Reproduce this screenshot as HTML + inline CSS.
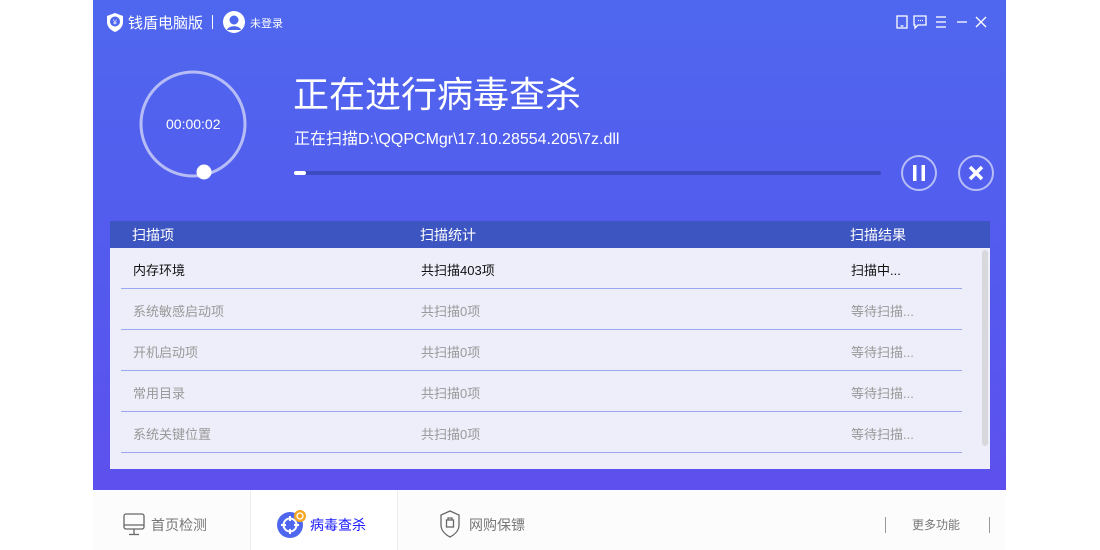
<!DOCTYPE html>
<html><head><meta charset="utf-8"><style>
*{margin:0;padding:0;box-sizing:border-box}
body{width:1100px;height:550px;background:#fff;position:relative;overflow:hidden;font-family:"Liberation Sans","Noto Sans CJK SC",sans-serif}
.win{position:absolute;left:93px;top:0;width:913px;height:490px;background:linear-gradient(180deg,#4f67ee 0%,#5459ee 60%,#5e50ee 100%)}
.a{position:absolute;white-space:nowrap}
.w{color:#fff}
.tbl{position:absolute;left:110px;top:221px;width:880px;height:248px;background:#eeeefa}
.hd{position:absolute;left:0;top:0;width:880px;height:27px;background:#3d55c0;color:#fff;font-size:14px}
.row{position:absolute;left:11px;width:841px;height:41px;border-bottom:1px solid #9aa8f0;font-size:13px;color:#999}
.row span{position:absolute;top:12px}
.bot{position:absolute;left:93px;top:490px;width:913px;height:60px;background:#fcfcfc}
</style></head><body>
<div class="win">
  <svg class="a" style="left:12px;top:12px" width="20" height="21" viewBox="0 0 20 21"><path d="M10 1 L18 4 V10 C18 15 14 18.5 10 20 C6 18.5 2 15 2 10 V4 Z" fill="#fff"/><circle cx="10" cy="9.5" r="5" fill="#4f67ee"/><text x="10" y="12.5" font-size="7" fill="#fff" text-anchor="middle" font-family="Liberation Sans">¥</text></svg>
  <div class="a w" style="left:35px;top:12px;font-size:15px">钱盾电脑版</div>
  <div class="a" style="left:119px;top:15px;width:1px;height:14px;background:#fff"></div>
  <svg class="a" style="left:130px;top:11px" width="22" height="22" viewBox="0 0 22 22"><circle cx="11" cy="11" r="11" fill="#fff"/><circle cx="11" cy="9" r="4.5" fill="#4f67ee"/><path d="M4 19 C5 14 17 14 18 19 Z" fill="#4f67ee"/></svg>
  <div class="a w" style="left:157px;top:15px;font-size:11px">未登录</div>
  <svg class="a" style="left:803px;top:14px" width="100" height="16" viewBox="0 0 100 16" stroke="#fff" fill="none" stroke-width="1.3"><rect x="1" y="2" width="10" height="12"/><line x1="4.5" y1="12" x2="7.5" y2="12"/><path d="M18 2 H30 V11 H22 L19 14 V11 H18 Z"/><line x1="22" y1="6.5" x2="23" y2="6.5"/><line x1="24" y1="6.5" x2="25" y2="6.5"/><line x1="26" y1="6.5" x2="27" y2="6.5"/><line x1="40" y1="3" x2="50" y2="3"/><line x1="40" y1="8" x2="50" y2="8"/><line x1="40" y1="13" x2="50" y2="13"/><line x1="61" y1="8" x2="71" y2="8"/><line x1="80" y1="3" x2="90" y2="13"/><line x1="90" y1="3" x2="80" y2="13"/></svg>
</div>
<svg class="a" style="left:138px;top:69px" width="112" height="112" viewBox="0 0 112 112"><circle cx="55" cy="55" r="52" stroke="#b6bdf6" stroke-width="3" fill="none"/><circle cx="66" cy="103" r="7.5" fill="#fff"/></svg>
<div class="a w" style="left:166px;top:116px;font-size:14px">00:00:02</div>
<div class="a w" style="left:293px;top:72px;font-size:36px;line-height:46px">正在进行病毒查杀</div>
<div class="a w" style="left:294px;top:125px;font-size:16px">正在扫描D:\QQPCMgr\17.10.28554.205\7z.dll</div>
<div class="a" style="left:294px;top:171px;width:587px;height:4px;border-radius:2px;background:#3e4bbf"></div>
<div class="a" style="left:294px;top:171px;width:12px;height:4px;border-radius:2px;background:#fff"></div>
<svg class="a" style="left:900px;top:154px" width="96" height="38" viewBox="0 0 96 38"><circle cx="19" cy="19" r="17" stroke="#b6bdf6" stroke-width="2" fill="none"/><rect x="13" y="11" width="3.5" height="16" fill="#fff"/><rect x="21.5" y="11" width="3.5" height="16" fill="#fff"/><circle cx="76" cy="19" r="17" stroke="#b6bdf6" stroke-width="2" fill="none"/><path d="M70 13 L82 25 M82 13 L70 25" stroke="#fff" stroke-width="3.5"/></svg>
<div class="tbl">
  <div class="hd"><span class="a" style="left:22px;top:4px">扫描项</span><span class="a" style="left:310px;top:4px">扫描统计</span><span class="a" style="left:740px;top:4px">扫描结果</span></div>
  <div class="row" style="top:27px;color:#111"><span style="left:12px">内存环境</span><span style="left:300px">共扫描403项</span><span style="left:730px">扫描中...</span></div>
  <div class="row" style="top:68px"><span style="left:12px">系统敏感启动项</span><span style="left:300px">共扫描0项</span><span style="left:730px">等待扫描...</span></div>
  <div class="row" style="top:109px"><span style="left:12px">开机启动项</span><span style="left:300px">共扫描0项</span><span style="left:730px">等待扫描...</span></div>
  <div class="row" style="top:150px"><span style="left:12px">常用目录</span><span style="left:300px">共扫描0项</span><span style="left:730px">等待扫描...</span></div>
  <div class="row" style="top:191px"><span style="left:12px">系统关键位置</span><span style="left:300px">共扫描0项</span><span style="left:730px">等待扫描...</span></div>
  <div class="a" style="left:872px;top:29px;width:6px;height:196px;border-radius:3px;background:#d8d8dc"></div>
</div>
<div class="bot">
  <div class="a" style="left:157px;top:0;width:148px;height:60px;background:#fff;border-left:1px solid #eee;border-right:1px solid #eee"></div>
  <svg class="a" style="left:30px;top:23px" width="22" height="24" viewBox="0 0 22 24" stroke="#666" fill="none" stroke-width="1.3"><rect x="1" y="1" width="20" height="15" rx="2"/><line x1="1" y1="12" x2="21" y2="12"/><line x1="11" y1="16" x2="11" y2="21"/><line x1="6" y1="21.5" x2="16" y2="21.5"/></svg>
  <div class="a" style="left:58px;top:25px;font-size:14px;color:#777">首页检测</div>
  <svg class="a" style="left:184px;top:19px" width="32" height="30" viewBox="0 0 32 30"><circle cx="13" cy="16" r="13" fill="#4f67ee"/><circle cx="13" cy="16" r="6.5" stroke="#fff" stroke-width="2" fill="none"/><path d="M13 7 V12 M13 20 V25 M4 16 H9 M17 16 H22" stroke="#fff" stroke-width="2"/><circle cx="23" cy="7" r="6" fill="#f5a623"/><circle cx="23" cy="7" r="3" fill="none" stroke="#fff" stroke-width="1.3"/></svg>
  <div class="a" style="left:217px;top:25px;font-size:14px;color:#1a1aff">病毒查杀</div>
  <svg class="a" style="left:347px;top:20px" width="20" height="28" viewBox="0 0 20 28" stroke="#666" fill="none" stroke-width="1.3"><path d="M10 1 L19 5 V15 C19 21 14 25 10 27 C6 25 1 21 1 15 V5 Z"/><rect x="6.5" y="10" width="7" height="7"/><path d="M8 10 V8 H12 V10"/></svg>
  <div class="a" style="left:376px;top:25px;font-size:14px;color:#777">网购保镖</div>
  <div class="a" style="left:792px;top:27px;width:1px;height:16px;background:#999"></div>
  <div class="a" style="left:819px;top:26px;font-size:12px;color:#777">更多功能</div>
  <div class="a" style="left:896px;top:27px;width:1px;height:16px;background:#999"></div>
</div>
</body></html>
